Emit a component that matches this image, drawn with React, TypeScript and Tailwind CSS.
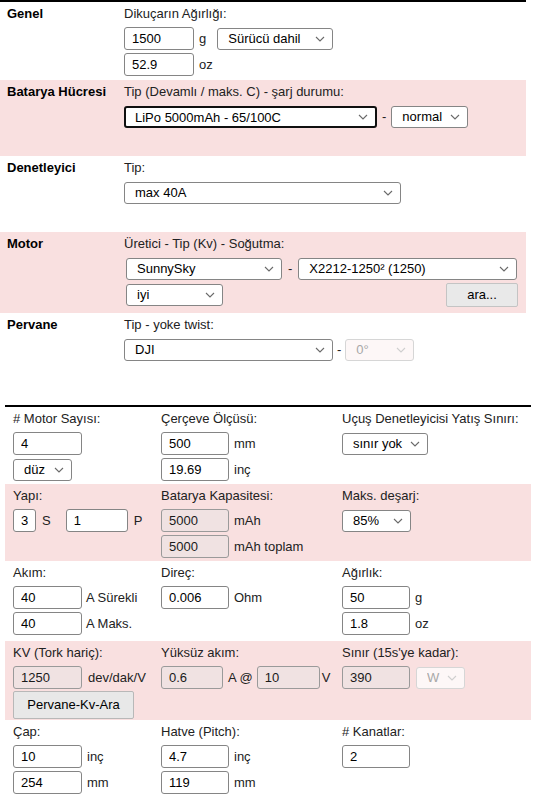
import React from 'react';

type FieldProps = { value: string; w: string; muted?: boolean };

const Field: React.FC<FieldProps> = ({ value, w, muted }) => (
  <input
    readOnly
    value={value}
    className={`${w} h-[23px] box-border rounded-[3px] border px-[7px] py-0 text-[13px] outline-none ${
      muted ? 'border-[#9a9a9a] bg-[#f0e2e2] text-[#1a1a1a]' : 'border-[#858585] bg-white text-black'
    }`}
  />
);

type SelProps = { value: string; w: string; disabled?: boolean; focused?: boolean };

const Sel: React.FC<SelProps> = ({ value, w, disabled, focused }) => (
  <div
    className={`relative ${w} h-[22px] box-border rounded-[3px] ${
      focused
        ? 'border-2 border-[#101010] bg-white'
        : disabled
        ? 'border border-[#d6d6d6] bg-[#fdf7f7]'
        : 'border border-[#858585] bg-white'
    }`}
  >
    <select
      disabled={disabled}
      className={`h-full w-full appearance-none bg-transparent py-0 pr-[22px] text-[13px] outline-none ${
        focused ? 'pl-[9px]' : 'pl-[10px]'
      } ${disabled ? 'text-[#a8a8a8]' : 'text-black'}`}
    >
      <option>{value}</option>
    </select>
    <svg
      viewBox="0 0 10 6"
      className="pointer-events-none absolute right-[7px] top-1/2 h-[6px] w-[10px] -translate-y-1/2"
    >
      <path d="M1 1 L5 5 L9 1" fill="none" stroke={disabled ? '#cfcfcf' : '#6a6a6a'} strokeWidth="1.1" />
    </svg>
  </div>
);

const Unit: React.FC<{ children: React.ReactNode; className?: string }> = ({ children, className }) => (
  <span className={`text-[13px] text-[#222] ${className ?? 'ml-[5px]'}`}>{children}</span>
);

const Label: React.FC<{ children: React.ReactNode }> = ({ children }) => (
  <div className="h-[16px] text-[13px] leading-[16px] text-[#222]">{children}</div>
);

type SectionProps = { title: string; field: string; h: string; pink?: boolean; children: React.ReactNode };

const Section: React.FC<SectionProps> = ({ title, field, h, pink, children }) => (
  <div className={`flex ${h} ${pink ? 'bg-[#f9e0e0]' : ''}`}>
    <div className="w-[124px] shrink-0 pl-[7px] pt-[4px] text-[13px] leading-[16px] font-bold text-black">
      {title}
    </div>
    <div className="flex-1 pt-[4px]">
      <Label>{field}</Label>
      <div className="mt-[5px] flex flex-col gap-[3px]">{children}</div>
    </div>
  </div>
);

const Cell: React.FC<{ label: string; children?: React.ReactNode }> = ({ label, children }) => (
  <div className="pt-[4px]">
    <Label>{label}</Label>
    <div className="mt-[5px] flex flex-col gap-[3px]">{children}</div>
  </div>
);

const Row: React.FC<{ h: string; pink?: boolean; children: React.ReactNode }> = ({ h, pink, children }) => (
  <div className={`grid ${h} grid-cols-[148px_181px_1fr] pl-[8px] ${pink ? 'bg-[#f9e0e0]' : ''}`}>{children}</div>
);

const Line: React.FC<{ children: React.ReactNode }> = ({ children }) => (
  <div className="flex h-[23px] items-center">{children}</div>
);

export default function App() {
  return (
    <div className="min-h-[812px] w-[545px] bg-white font-['Liberation_Sans',Arial,sans-serif] text-[13px] text-black">
      <div className="w-[526px] border-t-2 border-black">
        <Section title="Genel" field="Dikuçarın Ağırlığı:" h="h-[78px]">
          <Line>
            <Field value="1500" w="w-[70px]" />
            <Unit>g</Unit>
            <span className="w-[11px]" />
            <Sel value="Sürücü dahil" w="w-[116px]" />
          </Line>
          <Line>
            <Field value="52.9" w="w-[70px]" />
            <Unit>oz</Unit>
          </Line>
        </Section>

        <Section title="Batarya Hücresi" field="Tip (Devamlı / maks. C) - şarj durumu:" h="h-[76px]" pink>
          <Line>
            <Sel value="LiPo 5000mAh - 65/100C" w="w-[253px]" focused />
            <Unit className="mx-[5px]">-</Unit>
            <Sel value="normal" w="w-[77px]" />
          </Line>
        </Section>

        <Section title="Denetleyici" field="Tip:" h="h-[76px]">
          <Line>
            <Sel value="max 40A" w="w-[277px]" />
          </Line>
        </Section>

        <Section title="Motor" field="Üretici - Tip (Kv) - Soğutma:" h="h-[81px]" pink>
          <Line>
            <span className="w-[2px]" />
            <Sel value="SunnySky" w="w-[156px]" />
            <Unit className="mx-[6px]">-</Unit>
            <Sel value="X2212-1250² (1250)" w="w-[219px]" />
          </Line>
          <div className="flex h-[24px] items-center justify-between pl-[2px] pr-[8px]">
            <Sel value="iyi" w="w-[97px]" />
            <button className="h-[24px] w-[72px] rounded-[2px] border border-[#c4c4c4] bg-[#e9e9e9] text-[13px] text-black">
              ara...
            </button>
          </div>
        </Section>

        <Section title="Pervane" field="Tip - yoke twist:" h="h-[60px]">
          <Line>
            <Sel value="DJI" w="w-[209px]" />
            <Unit className="mx-[4px]">-</Unit>
            <Sel value="0°" w="w-[69px]" disabled />
          </Line>
        </Section>
      </div>

      <div className="ml-[5px] mt-[32px] w-[526px] border-t-2 border-black">
        <Row h="h-[77px]">
          <Cell label="# Motor Sayısı:">
            <Line>
              <Field value="4" w="w-[69px]" />
            </Line>
            <Line>
              <Sel value="düz" w="w-[59px]" />
            </Line>
          </Cell>
          <Cell label="Çerçeve Ölçüsü:">
            <Line>
              <Field value="500" w="w-[68px]" />
              <Unit>mm</Unit>
            </Line>
            <Line>
              <Field value="19.69" w="w-[68px]" />
              <Unit>inç</Unit>
            </Line>
          </Cell>
          <Cell label="Uçuş Denetleyicisi Yatış Sınırı:">
            <Line>
              <Sel value="sınır yok" w="w-[86px]" />
            </Line>
          </Cell>
        </Row>

        <Row h="h-[77px]" pink>
          <Cell label="Yapı:">
            <Line>
              <Field value="3" w="w-[23px]" />
              <Unit className="ml-[6px]">S</Unit>
              <span className="w-[15px]" />
              <Field value="1" w="w-[62px]" />
              <Unit className="ml-[6px]">P</Unit>
            </Line>
          </Cell>
          <Cell label="Batarya Kapasitesi:">
            <Line>
              <Field value="5000" w="w-[68px]" muted />
              <Unit>mAh</Unit>
            </Line>
            <Line>
              <Field value="5000" w="w-[68px]" muted />
              <Unit>mAh toplam</Unit>
            </Line>
          </Cell>
          <Cell label="Maks. deşarj:">
            <Line>
              <Sel value="85%" w="w-[69px]" />
            </Line>
          </Cell>
        </Row>

        <Row h="h-[80px]">
          <Cell label="Akım:">
            <Line>
              <Field value="40" w="w-[69px]" />
              <Unit className="ml-[4px]">A Sürekli</Unit>
            </Line>
            <Line>
              <Field value="40" w="w-[69px]" />
              <Unit className="ml-[4px]">A Maks.</Unit>
            </Line>
          </Cell>
          <Cell label="Direç:">
            <Line>
              <Field value="0.006" w="w-[68px]" />
              <Unit>Ohm</Unit>
            </Line>
          </Cell>
          <Cell label="Ağırlık:">
            <Line>
              <Field value="50" w="w-[68px]" />
              <Unit>g</Unit>
            </Line>
            <Line>
              <Field value="1.8" w="w-[68px]" />
              <Unit>oz</Unit>
            </Line>
          </Cell>
        </Row>

        <div className="h-[79px] bg-[#f9e0e0]">
          <div className="grid grid-cols-[148px_181px_1fr] pl-[8px]">
            <Cell label="KV (Tork hariç):">
              <Line>
                <Field value="1250" w="w-[69px]" muted />
                <Unit className="ml-[6px]">dev/dak/V</Unit>
              </Line>
            </Cell>
            <Cell label="Yüksüz akım:">
              <Line>
                <Field value="0.6" w="w-[62px]" muted />
                <Unit className="ml-[5px] mr-[4px]">A @</Unit>
                <Field value="10" w="w-[63px]" muted />
                <Unit className="ml-[2px]">V</Unit>
              </Line>
            </Cell>
            <Cell label="Sınır (15s'ye kadar):">
              <Line>
                <Field value="390" w="w-[68px]" muted />
                <span className="w-[6px]" />
                <Sel value="W" w="w-[49px]" disabled />
              </Line>
            </Cell>
          </div>
          <div className="mt-[2px] pl-[8px]">
            <button className="h-[28px] w-[121px] rounded-[2px] border border-[#b8b8b8] bg-[#e8e8e8] text-[13px] text-black">
              Pervane-Kv-Ara
            </button>
          </div>
        </div>

        <Row h="h-[80px]">
          <Cell label="Çap:">
            <Line>
              <Field value="10" w="w-[69px]" />
              <Unit>inç</Unit>
            </Line>
            <Line>
              <Field value="254" w="w-[69px]" />
              <Unit>mm</Unit>
            </Line>
          </Cell>
          <Cell label="Hatve (Pitch):">
            <Line>
              <Field value="4.7" w="w-[68px]" />
              <Unit>inç</Unit>
            </Line>
            <Line>
              <Field value="119" w="w-[68px]" />
              <Unit>mm</Unit>
            </Line>
          </Cell>
          <Cell label="# Kanatlar:">
            <Line>
              <Field value="2" w="w-[68px]" />
            </Line>
          </Cell>
        </Row>
      </div>
    </div>
  );
}
